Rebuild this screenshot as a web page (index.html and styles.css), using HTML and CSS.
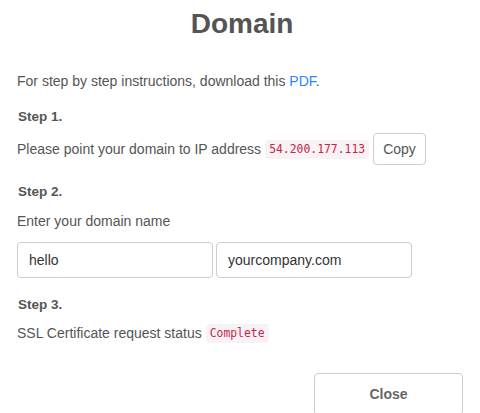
FILE: index.html
```html
<!DOCTYPE html>
<html lang="en">
<head>
<meta charset="utf-8">
<title>Domain</title>
<link rel="stylesheet" href="styles.css">
</head>
<body>
<div class="modal">
  <h1 class="title">Domain</h1>
  <p class="intro">For step by step instructions, download this <a class="link" href="#">PDF</a>.</p>

  <h4 class="step step-1">Step 1.</h4>
  <div class="row row-ip">
    <span class="text">Please point your domain to IP address</span>
    <code class="code">54.200.177.113</code>
    <button class="btn btn-copy" type="button">Copy</button>
  </div>

  <h4 class="step step-2">Step 2.</h4>
  <p class="label">Enter your domain name</p>
  <div class="inputs">
    <input class="input" type="text" value="hello">
    <input class="input" type="text" value="yourcompany.com">
  </div>

  <h4 class="step step-3">Step 3.</h4>
  <div class="row row-ssl">
    <span class="text">SSL Certificate request status</span>
    <code class="code">Complete</code>
  </div>

  <div class="footer">
    <button class="btn btn-close" type="button">Close</button>
  </div>
</div>
</body>
</html>
```

FILE: styles.css
```css
html, body {
  margin: 0;
  padding: 0;
  height: 100%;
  overflow: hidden;
  background: #fff;
}

body {
  font-family: "Liberation Sans", Arial, sans-serif;
  font-size: 14px;
  line-height: 20px;
  color: #555;
}

.modal {
  padding: 0 17px;
}

.title {
  margin: 8px 0 0;
  padding-left: 4px;
  font-size: 28px;
  line-height: 32px;
  font-weight: bold;
  text-align: center;
  color: #545454;
}

.intro {
  margin: 31px 0 0;
}

.link {
  color: #2f86f6;
  text-decoration: none;
}

.step {
  margin: 0;
  font-size: 13.5px;
  line-height: 20px;
  font-weight: bold;
  color: #555;
  padding-left: 1px;
}

.step-1 { margin-top: 16px; }
.step-2 { margin-top: 17px; }
.step-3 { margin-top: 17px; }

.row {
  display: flex;
  align-items: center;
  gap: 4px;
}

.row-ip {
  margin-top: 6px;
  height: 32px;
}

.row-ssl {
  margin-top: 8px;
  height: 20px;
}

.code {
  font-family: "DejaVu Sans Mono", "Liberation Mono", monospace;
  font-size: 11.4px;
  line-height: 15px;
  padding: 2px 4px;
  color: #c7254e;
  background: #f9f2f4;
  border-radius: 4px;
}

.label {
  margin: 9px 0 0;
}

.inputs {
  display: flex;
  gap: 3px;
  margin-top: 11px;
}

.input {
  box-sizing: border-box;
  width: 196px;
  height: 36px;
  margin: 0;
  padding: 0 11px;
  border: 1px solid #ccc;
  border-radius: 4px;
  font-family: "Liberation Sans", Arial, sans-serif;
  font-size: 14px;
  color: #333;
  background: #fff;
  outline: none;
}

.btn {
  font-family: "Liberation Sans", Arial, sans-serif;
  font-size: 14px;
  line-height: 20px;
  background: #fff;
  border: 1px solid #ccc;
  border-radius: 4px;
  margin: 0;
  cursor: pointer;
}

.btn-copy {
  padding: 5px 9px;
  color: #555;
}

.footer {
  display: flex;
  justify-content: flex-end;
  margin-top: 30px;
}

.btn-close {
  width: 149px;
  padding: 10px 16px;
  font-weight: bold;
  color: #666;
}
```
